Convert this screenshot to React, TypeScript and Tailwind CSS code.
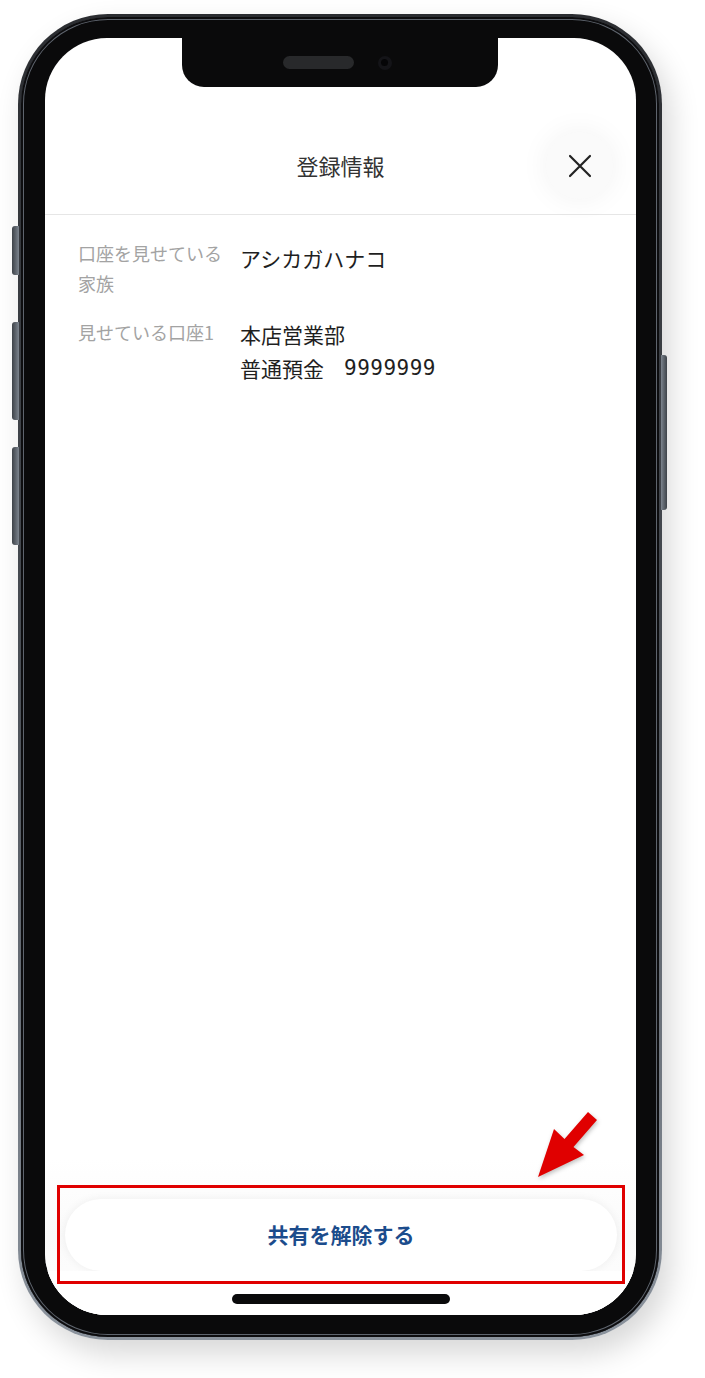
import React from "react";

const jp = { fontFamily: '"Noto Sans CJK JP", "Noto Sans", sans-serif' };
const mono = { fontFamily: '"DejaVu Sans Mono", "Liberation Mono", monospace' };

function CloseIcon() {
  return (
    <svg width="24" height="24" viewBox="0 0 24 24" fill="none">
      <path d="M2 2 L22 22 M22 2 L2 22" stroke="#222" strokeWidth="2.2" strokeLinecap="round" />
    </svg>
  );
}

function InfoRow({ label, children }: { label: React.ReactNode; children: React.ReactNode }) {
  return (
    <div className="flex items-start">
      <div className="w-[195px] shrink-0 pl-[33px] pr-[8px] text-[18px] leading-[30px] text-[#a3a3a3]">{label}</div>
      <div className="text-[21px] leading-[34px] text-[#1f1f1f]">{children}</div>
    </div>
  );
}

function Screen() {
  return (
    <div className="relative flex h-full flex-col overflow-hidden rounded-[62px] bg-white" style={jp}>
      {/* notch */}
      <div className="absolute left-[137px] top-0 z-10 flex h-[49px] w-[316px] items-center justify-center gap-[24px] rounded-b-[22px] bg-[#0a0a0b]">
        <div className="ml-[-6px] h-[13px] w-[71px] rounded-full bg-[#28292b]" />
        <div className="flex h-[14px] w-[14px] items-center justify-center rounded-full bg-[#141418]">
          <div className="h-[7px] w-[7px] rounded-full bg-[#050507]" />
        </div>
      </div>

      {/* header */}
      <div className="border-b border-[#e6e6e6] pb-[15px] pt-[94px]">
        <div className="grid h-[67px] grid-cols-[1fr_auto_1fr] items-center">
          <div />
          <div className="text-[22px] text-[#333]">登録情報</div>
          <div className="flex justify-end pr-[23px]">
            <button className="flex h-[67px] w-[67px] items-center justify-center rounded-full bg-[#fafafa] shadow-[0_0_30px_rgba(0,0,0,0.06)]">
              <CloseIcon />
            </button>
          </div>
        </div>
      </div>

      {/* info */}
      <div className="flex flex-col gap-[19px] pt-[23px]">
        <InfoRow label={<>口座を見せている家族</>}>
          <div className="pt-[3px]">アシカガハナコ</div>
        </InfoRow>
        <InfoRow label="見せている口座1">
          <div>本店営業部</div>
          <div className="flex items-center gap-[20px]">
            <span>普通預金</span>
            <span style={mono} className="text-[21px] tracking-[0.5px]">9999999</span>
          </div>
        </InfoRow>
      </div>

      <div className="flex-1" />

      {/* bottom */}
      <div className="bg-gradient-to-b from-white via-[#fafafa] to-white pt-[40px]">
        <div className="px-[20px] pr-[19px]">
          <button className="flex h-[72px] w-full items-center justify-center rounded-[36px] bg-white shadow-[0_0_10px_rgba(0,0,0,0.06)]">
            <span className="text-[21px] font-bold text-[#1b4c8c]">共有を解除する</span>
          </button>
        </div>
        <div className="flex justify-center bg-white pb-[11px] pt-[23px]">
          <div className="h-[10px] w-[218px] rounded-full bg-[#0a0a0b]" />
        </div>
      </div>
    </div>
  );
}

export default function App() {
  return (
    <div className="relative h-[1378px] w-[705px] overflow-hidden bg-white">
      <div className="relative ml-[18px] mt-[14px] h-[1326px] w-[644px]">
        {/* side buttons */}
        <div className="absolute left-[-6px] top-[212px] h-[49px] w-[7px] rounded-l-[3px] bg-gradient-to-r from-[#3e4349] to-[#7d858f]" />
        <div className="absolute left-[-6px] top-[308px] h-[98px] w-[7px] rounded-l-[3px] bg-gradient-to-r from-[#3e4349] to-[#7d858f]" />
        <div className="absolute left-[-6px] top-[433px] h-[98px] w-[7px] rounded-l-[3px] bg-gradient-to-r from-[#3e4349] to-[#7d858f]" />
        <div className="absolute right-[-5px] top-[341px] h-[155px] w-[6px] rounded-r-[3px] bg-gradient-to-l from-[#3e4349] to-[#7d858f]" />

        <div className="h-full w-full rounded-[90px] bg-gradient-to-b from-[#2b2d31] via-[#4a4f56] to-[#8b939d] p-[3px] shadow-[8px_14px_30px_rgba(0,0,0,0.16)]">
          <div className="h-full w-full rounded-[87px] bg-[#0a0a0b] pb-[22px] pl-[24px] pr-[23px] pt-[21px] shadow-[inset_0_0_0_2px_#0d0d0f,inset_0_0_0_3px_#5e646d]">
            <Screen />
          </div>
        </div>
      </div>

      {/* annotation */}
      <div className="absolute left-[57px] top-[1185px] h-[99px] w-[568px] border-[3px] border-[#e00000]" />
      <svg
        className="absolute left-[530px] top-[1105px] drop-shadow-[1px_2px_2px_rgba(0,0,0,0.25)]"
        width="75"
        height="80"
        viewBox="0 0 75 80"
      >
        <polygon points="8,72 24,24 34.5,34 58,7 67,15 43.5,42 54,50" fill="#e00000" />
      </svg>
    </div>
  );
}
